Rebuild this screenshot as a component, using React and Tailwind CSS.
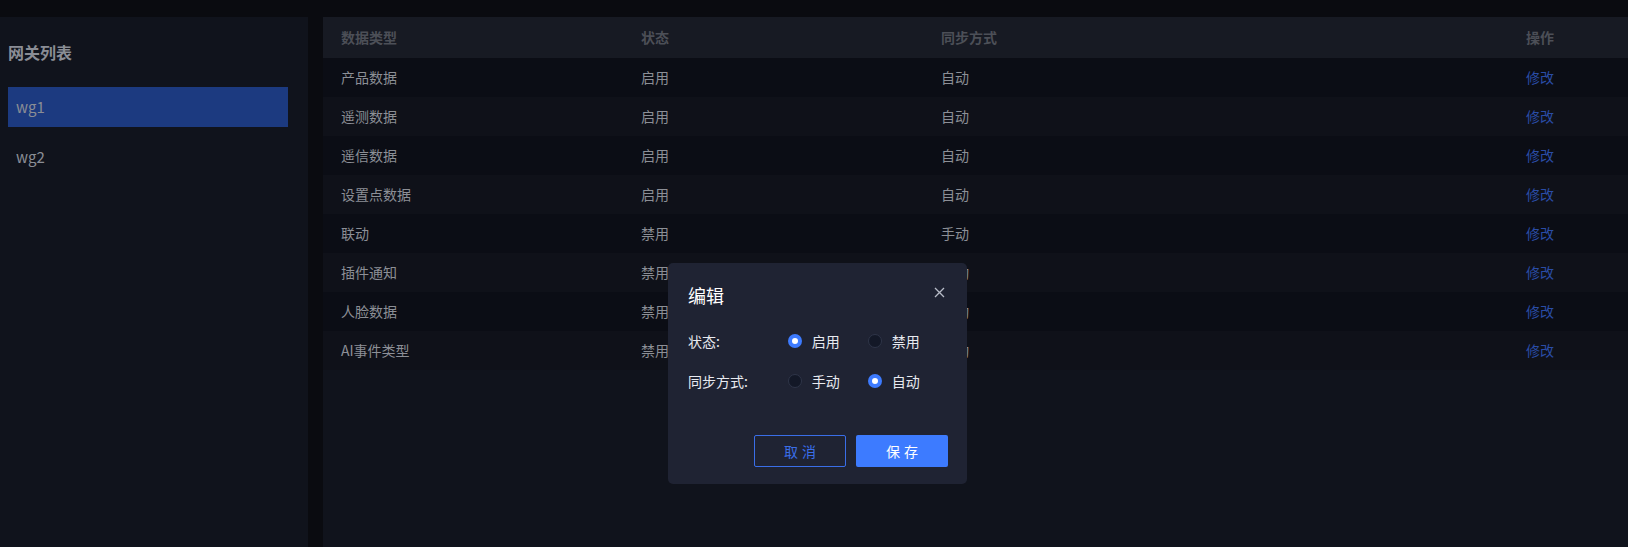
import React, { useState } from "react";

const rows = [
	{ type: "产品数据", status: "启用", sync: "自动" },
	{ type: "遥测数据", status: "启用", sync: "自动" },
	{ type: "遥信数据", status: "启用", sync: "自动" },
	{ type: "设置点数据", status: "启用", sync: "自动" },
	{ type: "联动", status: "禁用", sync: "手动" },
	{ type: "插件通知", status: "禁用", sync: "手动" },
	{ type: "人脸数据", status: "禁用", sync: "手动" },
	{ type: "AI事件类型", status: "禁用", sync: "手动" },
];

const Radio = ({ checked, label, onClick }) => (
	<div className="flex items-center w-[82px] cursor-pointer" onClick={onClick}>
		{checked ? (
			<span className="w-[14px] h-[14px] rounded-full bg-[#3d7bff] flex items-center justify-center">
				<span className="w-[6px] h-[6px] rounded-full bg-white" />
			</span>
		) : (
			<span className="w-[14px] h-[14px] rounded-full bg-[#131827] border border-[#2e3548]" />
		)}
		<span className="ml-[10px] text-[14px] text-[#e8eaf0]">{label}</span>
	</div>
);

const EditModal = () => {
	const [status, setStatus] = useState("on");
	const [sync, setSync] = useState("auto");

	return (
		<div className="absolute left-[668px] top-[263px] w-[299px] h-[221px] bg-[#1f2333] rounded-[5px] pl-5 pr-[19px] pt-[19px] pb-[17px] flex flex-col">
			<div className="flex items-center justify-between h-[26px]">
				<span className="text-[18px] text-white">编辑</span>
				<svg width="11" height="11" viewBox="0 0 11 11" className="mr-[3px] -mt-[6px]">
					<path d="M1 1L10 10M10 1L1 10" stroke="#b8bcc8" strokeWidth="1.3" />
				</svg>
			</div>
			<div className="flex items-center mt-[23px] h-[20px]">
				<span className="w-[102px] text-[14px] text-[#e8eaf0]">状态:</span>
				<Radio checked={status === "on"} label="启用" onClick={() => setStatus("on")} />
				<Radio checked={status === "off"} label="禁用" onClick={() => setStatus("off")} />
			</div>
			<div className="flex items-center mt-[20px] h-[20px]">
				<span className="w-[102px] text-[14px] text-[#e8eaf0]">同步方式:</span>
				<Radio checked={sync === "manual"} label="手动" onClick={() => setSync("manual")} />
				<Radio checked={sync === "auto"} label="自动" onClick={() => setSync("auto")} />
			</div>
			<div className="mt-auto flex justify-end gap-[10px]">
				<button className="w-[92px] h-[32px] border border-[#3a6ee8] rounded-[2px] text-[14px] text-[#3a6ee8] tracking-[4px] pl-[4px]">
					取消
				</button>
				<button className="w-[92px] h-[32px] bg-[#3d7bff] rounded-[2px] text-[14px] text-white tracking-[4px] pl-[4px]">
					保存
				</button>
			</div>
		</div>
	);
};

export default function App() {
	const [active, setActive] = useState(0);

	return (
		<div
			className="relative w-full h-[547px] bg-[#0a0b10] pt-[17px] flex overflow-hidden"
			style={{ fontFamily: '"Noto Sans CJK SC", "Noto Sans", sans-serif' }}
		>
			<div className="w-[308px] h-full bg-[#10131c] pl-2 pr-5 pt-[23px]">
				<div className="text-[16px] font-bold text-[#8a8d95] h-[24px] leading-[24px]">网关列表</div>
				<div className="mt-[23px] flex flex-col gap-[10px]">
					{["wg1", "wg2"].map((g, i) => (
						<div
							key={g}
							onClick={() => setActive(i)}
							className={`h-[40px] px-2 flex items-center text-[15px] text-[#8a8d95] cursor-pointer ${
								active === i ? "bg-[#1c3a80]" : ""
							}`}
						>
							{g}
						</div>
					))}
				</div>
			</div>
			<div className="ml-[15px] flex-1 h-full bg-[#10131c]">
				<div className="grid grid-cols-[300px_300px_585px_1fr] px-[18px] h-[41px] items-center bg-[#171a23] text-[14px] font-bold text-[#4c4f57]">
					<span>数据类型</span>
					<span>状态</span>
					<span>同步方式</span>
					<span>操作</span>
				</div>
				{rows.map((r, i) => (
					<div
						key={r.type}
						className={`grid grid-cols-[300px_300px_585px_1fr] px-[18px] h-[39px] items-center text-[14px] text-[#8c8f96] ${
							i % 2 === 0 ? "bg-[#0b0d15]" : "bg-[#0f1119]"
						}`}
					>
						<span>{r.type}</span>
						<span>{r.status}</span>
						<span>{r.sync}</span>
						<span className="text-[#2a4ca6] cursor-pointer">修改</span>
					</div>
				))}
			</div>
			<EditModal />
		</div>
	);
}
